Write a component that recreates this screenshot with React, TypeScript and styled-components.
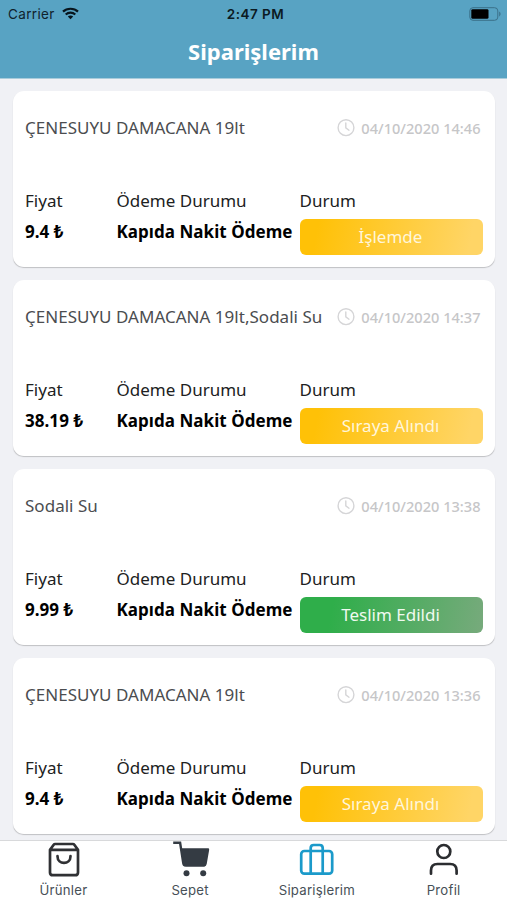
import React from "react";
import styled, { createGlobalStyle } from "styled-components";

const GlobalStyle = createGlobalStyle`
  * { box-sizing: border-box; }
  body { margin: 0; overflow: hidden; background: #f0f1f5; }
`;

const Screen = styled.div`
  width: 507px;
  height: 900px;
  display: flex;
  flex-direction: column;
  overflow: hidden;
  background: #f0f1f5;
  font-family: "Noto Sans", sans-serif;
`;

const Header = styled.header`
  flex: none;
  height: 79px;
  background: #58a3c3;
  border-bottom: 1px solid #a9ccdb;
`;

const StatusBar = styled.div`
  height: 27px;
  padding: 0 6px 0 8px;
  display: grid;
  grid-template-columns: 1fr auto 1fr;
  align-items: center;
  font-family: Inter, sans-serif;
  font-size: 13.5px;
  color: #10222c;
`;

const Carrier = styled.div`
  display: flex;
  align-items: center;
  gap: 7px;
  letter-spacing: 0.35px;
`;

const Clock = styled.div`
  padding-left: 2px;
  font-weight: 600;
  letter-spacing: 0.5px;
  color: #0b1a22;
`;

const BatterySlot = styled.div`
  display: flex;
  justify-content: flex-end;
`;

const Title = styled.h1`
  margin: 0;
  height: 50px;
  line-height: 49px;
  text-align: center;
  font-size: 22px;
  font-weight: 700;
  color: #fff;
`;

const OrderList = styled.main`
  flex: 1;
  min-height: 0;
  overflow: hidden;
  padding: 12px 12.5px 0 12.5px;
  display: flex;
  flex-direction: column;
  gap: 13px;
`;

const Card = styled.article`
  flex: none;
  height: 176px;
  padding: 0 12px 0 12.5px;
  border-radius: 11px;
  background: #fff;
  box-shadow: 0 1px 1px -0.5px rgba(0, 0, 0, 0.2);
`;

const CardTop = styled.div`
  height: 74px;
  display: flex;
  justify-content: space-between;
`;

const Product = styled.div`
  line-height: 74px;
  font-size: 17px;
  letter-spacing: 0.02px;
  white-space: nowrap;
  color: #4b4d50;
`;

const OrderDate = styled.div`
  height: 74px;
  padding-right: 2px;
  display: flex;
  align-items: center;
  gap: 6px;
  font-size: 14.6px;
  font-weight: 500;
  white-space: nowrap;
  color: #c6c6c8;
`;

const Details = styled.div`
  display: grid;
  grid-template-columns: 91.5px 183px 183px;
  padding-top: 24px;
`;

const Label = styled.div`
  height: 24px;
  line-height: 24px;
  font-size: 17px;
  white-space: nowrap;
  color: #202122;
`;

const Value = styled.div`
  height: 37px;
  line-height: 37px;
  font-size: 17px;
  font-weight: 700;
  letter-spacing: 0.05px;
  white-space: nowrap;
  color: #000;
`;

const Status = styled.div<{ $done: boolean }>`
  margin-top: 6px;
  height: 36px;
  line-height: 35px;
  padding-right: 1px;
  border-radius: 6px;
  text-align: center;
  font-size: 17px;
  color: ${(p) => (p.$done ? "#f0faf0" : "#fff6da")};
  background: ${(p) =>
    p.$done
      ? "linear-gradient(101deg, #2fae4a 18%, #77aa7c 100%)"
      : "linear-gradient(101deg, #ffc107 10%, #ffd566 92%)"};
`;

const TabBar = styled.nav`
  flex: none;
  height: 60px;
  display: grid;
  grid-template-columns: repeat(4, 1fr);
  border-top: 1px solid #d8d9db;
  background: #fff;
`;

const Tab = styled.div`
  display: flex;
  flex-direction: column;
  align-items: center;
  font-family: Inter, sans-serif;
  font-size: 13.2px;
  line-height: 18px;
  letter-spacing: 0.25px;
  color: #475057;

  svg {
    display: block;
    margin: 0 0 2px 1px;
  }
`;

const WifiIcon = () => (
  <svg width="17" height="13" viewBox="0 0 17 13" fill="none" stroke="#07151d">
    <path d="M1 4.6C5 .8 12 .8 16 4.6" strokeWidth="2.2" />
    <path d="M3.7 7.5C6.4 5 10.6 5 13.3 7.5" strokeWidth="2.1" />
    <path d="M8.5 12.2 5.8 9.5c1.5-1.4 3.9-1.4 5.4 0Z" fill="#07151d" stroke="none" />
  </svg>
);

const BatteryIcon = () => (
  <svg width="32" height="14" viewBox="0 0 32 14">
    <rect x=".8" y=".7" width="28" height="12.6" rx="3.2" fill="none" stroke="#3b7089" />
    <rect x="2.3" y="2.2" width="17.2" height="9.6" rx="1.4" fill="#000" />
    <path d="M30.2 4.6c1.8.7 1.8 4.1 0 4.8Z" fill="#3b7089" />
  </svg>
);

const ClockIcon = () => (
  <svg width="18" height="18" viewBox="0 0 18 18" fill="none" stroke="#d5d5d7" strokeWidth="1.4" strokeLinecap="round">
    <circle cx="9" cy="8.7" r="7.9" />
    <path d="M8.8 4v4.8l3.2 2.4" />
  </svg>
);

const BagIcon = () => (
  <svg width="36" height="38" viewBox="0 0 36 38" fill="none" stroke="#303134" strokeWidth="2.7" strokeLinecap="round" strokeLinejoin="round">
    <path d="m4 8.8 3.7-5.1q.5-.7 1.4-.7h17.8q.9 0 1.4.7L32 8.8v22.6q0 2.8-2.8 2.8H6.8Q4 34.2 4 31.400ZM4 8.800h28" />
    <path d="M11.500 15.200c0 8.800 13 8.800 13 0" />
  </svg>
);

const CartIcon = () => (
  <svg width="40" height="38" viewBox="0 0 40 38" fill="#343b43">
    <path d="M2.200 1.700h6.900l3.200 20.500q.4 2.200 2.500 2.200h19" fill="none" stroke="#343b43" strokeWidth="2.400" />
    <path d="M9.500 7.300H37q1.400 0 1.200 1.400l-2.500 14.400q-.4 2.500-2.900 2.500H15q-2.500 0-2.900-2.500Z" />
    <circle cx="15.500" cy="32.300" r="3" />
    <circle cx="32.200" cy="32.300" r="3" />
  </svg>
);

const BriefcaseIcon = () => (
  <svg width="38" height="38" viewBox="0 0 38 38" fill="none" stroke="#1b9aca" strokeWidth="2.700" strokeLinejoin="round">
    <rect x="3.200" y="10" width="31" height="22.700" rx="3.200" />
    <path d="M12.700 32.700V7q0-3 3-3h6q3 0 3 3v25.700" />
  </svg>
);

const PersonIcon = () => (
  <svg width="36" height="38" viewBox="0 0 36 38" fill="none" stroke="#2b2d30" strokeWidth="2.700" strokeLinecap="round">
    <circle cx="17.800" cy="10.500" r="6.500" />
    <path d="M5 32.700v-3.200q0-6.500 6.500-6.500h12.600q6.500 0 6.500 6.500v3.200" />
  </svg>
);

const orders = [
  { product: "ÇENESUYU DAMACANA 19lt", date: "04/10/2020 14:46", price: "9.4 ₺", status: "İşlemde", done: false },
  { product: "ÇENESUYU DAMACANA 19lt,Sodali Su", date: "04/10/2020 14:37", price: "38.19 ₺", status: "Sıraya Alındı", done: false },
  { product: "Sodali Su", date: "04/10/2020 13:38", price: "9.99 ₺", status: "Teslim Edildi", done: true },
  { product: "ÇENESUYU DAMACANA 19lt", date: "04/10/2020 13:36", price: "9.4 ₺", status: "Sıraya Alındı", done: false },
];

const tabs = [
  { label: "Ürünler", Icon: BagIcon },
  { label: "Sepet", Icon: CartIcon },
  { label: "Siparişlerim", Icon: BriefcaseIcon },
  { label: "Profil", Icon: PersonIcon },
];

export default function App() {
  return (
    <Screen lang="tr">
      <GlobalStyle />
      <Header>
        <StatusBar>
          <Carrier>Carrier <WifiIcon /></Carrier>
          <Clock>2:47 PM</Clock>
          <BatterySlot><BatteryIcon /></BatterySlot>
        </StatusBar>
        <Title>Siparişlerim</Title>
      </Header>
      <OrderList>
        {orders.map((o) => (
          <Card key={o.date}>
            <CardTop>
              <Product>{o.product}</Product>
              <OrderDate><ClockIcon />{o.date}</OrderDate>
            </CardTop>
            <Details>
              <div>
                <Label>Fiyat</Label>
                <Value>{o.price}</Value>
              </div>
              <div>
                <Label>Ödeme Durumu</Label>
                <Value>Kapıda Nakit Ödeme</Value>
              </div>
              <div>
                <Label>Durum</Label>
                <Status $done={o.done}>{o.status}</Status>
              </div>
            </Details>
          </Card>
        ))}
      </OrderList>
      <TabBar>
        {tabs.map(({ label, Icon }) => (
          <Tab key={label}><Icon />{label}</Tab>
        ))}
      </TabBar>
    </Screen>
  );
}
